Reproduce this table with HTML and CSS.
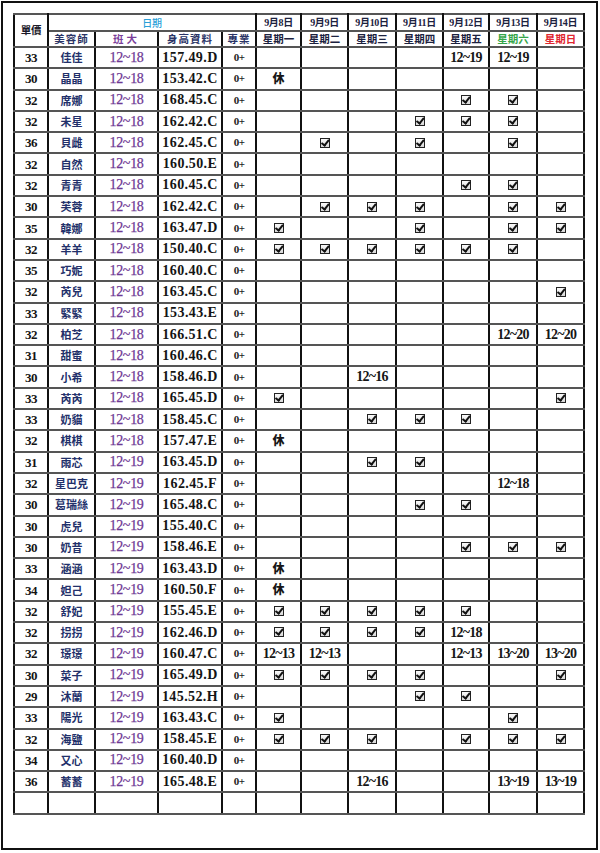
FILE: index.html
```html
<!DOCTYPE html>
<html lang="zh-Hant">
<head>
<meta charset="utf-8">
<title>班表</title>
<link rel="stylesheet" href="styles.css">
</head>
<body>
<div class="frame">
<table class="sheet">
<colgroup>
<col class="w34"><col class="w47"><col class="w63"><col class="w64"><col class="w34">
<col class="w45"><col class="w47"><col class="w48"><col class="w47"><col class="w46"><col class="w48"><col class="w47">
</colgroup>
<thead>
<tr class="hr1">
<th rowspan="2" class="price-h">單價</th>
<th colspan="4" class="date-h">日期</th>
<th>9月8日</th><th>9月9日</th><th>9月10日</th><th>9月11日</th><th>9月12日</th><th>9月13日</th><th>9月14日</th>
</tr>
<tr class="hr2">
<th class="sub">美容師</th><th class="sub">班大</th><th class="sub">身高資料</th><th class="sub">專業</th>
<th>星期一</th><th>星期二</th><th>星期三</th><th>星期四</th><th>星期五</th><th class="sat">星期六</th><th class="sun">星期日</th>
</tr>
</thead>
<tbody>
<tr><td>33</td><td>佳佳</td><td>12~18</td><td>157.49.D</td><td>0+</td><td></td><td></td><td></td><td></td><td>12~19</td><td>12~19</td><td></td></tr>
<tr><td>30</td><td>晶晶</td><td>12~18</td><td>153.42.C</td><td>0+</td><td><span class="off">休</span></td><td></td><td></td><td></td><td></td><td></td><td></td></tr>
<tr><td>32</td><td>席娜</td><td>12~18</td><td>168.45.C</td><td>0+</td><td></td><td></td><td></td><td></td><td><i class="chk"></i></td><td><i class="chk"></i></td><td></td></tr>
<tr><td>32</td><td>未星</td><td>12~18</td><td>162.42.C</td><td>0+</td><td></td><td></td><td></td><td><i class="chk"></i></td><td><i class="chk"></i></td><td><i class="chk"></i></td><td></td></tr>
<tr><td>36</td><td>貝雌</td><td>12~18</td><td>162.45.C</td><td>0+</td><td></td><td><i class="chk"></i></td><td></td><td><i class="chk"></i></td><td></td><td><i class="chk"></i></td><td></td></tr>
<tr><td>32</td><td>自然</td><td>12~18</td><td>160.50.E</td><td>0+</td><td></td><td></td><td></td><td></td><td></td><td></td><td></td></tr>
<tr><td>32</td><td>青青</td><td>12~18</td><td>160.45.C</td><td>0+</td><td></td><td></td><td></td><td></td><td><i class="chk"></i></td><td><i class="chk"></i></td><td></td></tr>
<tr><td>30</td><td>芙蓉</td><td>12~18</td><td>162.42.C</td><td>0+</td><td></td><td><i class="chk"></i></td><td><i class="chk"></i></td><td><i class="chk"></i></td><td></td><td><i class="chk"></i></td><td><i class="chk"></i></td></tr>
<tr><td>35</td><td>韓娜</td><td>12~18</td><td>163.47.D</td><td>0+</td><td><i class="chk"></i></td><td></td><td></td><td><i class="chk"></i></td><td></td><td><i class="chk"></i></td><td><i class="chk"></i></td></tr>
<tr><td>32</td><td>羊羊</td><td>12~18</td><td>150.40.C</td><td>0+</td><td><i class="chk"></i></td><td><i class="chk"></i></td><td><i class="chk"></i></td><td><i class="chk"></i></td><td><i class="chk"></i></td><td><i class="chk"></i></td><td></td></tr>
<tr><td>35</td><td>巧妮</td><td>12~18</td><td>160.40.C</td><td>0+</td><td></td><td></td><td></td><td></td><td></td><td></td><td></td></tr>
<tr><td>32</td><td>芮兒</td><td>12~18</td><td>163.45.C</td><td>0+</td><td></td><td></td><td></td><td></td><td></td><td></td><td><i class="chk"></i></td></tr>
<tr><td>33</td><td>緊緊</td><td>12~18</td><td>153.43.E</td><td>0+</td><td></td><td></td><td></td><td></td><td></td><td></td><td></td></tr>
<tr><td>32</td><td>柏芝</td><td>12~18</td><td>166.51.C</td><td>0+</td><td></td><td></td><td></td><td></td><td></td><td>12~20</td><td>12~20</td></tr>
<tr><td>31</td><td>甜蜜</td><td>12~18</td><td>160.46.C</td><td>0+</td><td></td><td></td><td></td><td></td><td></td><td></td><td></td></tr>
<tr><td>30</td><td>小希</td><td>12~18</td><td>158.46.D</td><td>0+</td><td></td><td></td><td>12~16</td><td></td><td></td><td></td><td></td></tr>
<tr><td>33</td><td>芮芮</td><td>12~18</td><td>165.45.D</td><td>0+</td><td><i class="chk"></i></td><td></td><td></td><td></td><td></td><td></td><td><i class="chk"></i></td></tr>
<tr><td>33</td><td>奶貓</td><td>12~18</td><td>158.45.C</td><td>0+</td><td></td><td></td><td><i class="chk"></i></td><td><i class="chk"></i></td><td><i class="chk"></i></td><td></td><td></td></tr>
<tr><td>32</td><td>棋棋</td><td>12~18</td><td>157.47.E</td><td>0+</td><td><span class="off">休</span></td><td></td><td></td><td></td><td></td><td></td><td></td></tr>
<tr><td>31</td><td>雨芯</td><td>12~19</td><td>163.45.D</td><td>0+</td><td></td><td></td><td><i class="chk"></i></td><td><i class="chk"></i></td><td></td><td></td><td></td></tr>
<tr><td>32</td><td>星巴克</td><td>12~19</td><td>162.45.F</td><td>0+</td><td></td><td></td><td></td><td></td><td></td><td>12~18</td><td></td></tr>
<tr><td>30</td><td>葛瑞絲</td><td>12~19</td><td>165.48.C</td><td>0+</td><td></td><td></td><td></td><td><i class="chk"></i></td><td><i class="chk"></i></td><td></td><td></td></tr>
<tr><td>30</td><td>虎兒</td><td>12~19</td><td>155.40.C</td><td>0+</td><td></td><td></td><td></td><td></td><td></td><td></td><td></td></tr>
<tr><td>30</td><td>奶昔</td><td>12~19</td><td>158.46.E</td><td>0+</td><td></td><td></td><td></td><td></td><td><i class="chk"></i></td><td><i class="chk"></i></td><td><i class="chk"></i></td></tr>
<tr><td>33</td><td>涵涵</td><td>12~19</td><td>163.43.D</td><td>0+</td><td><span class="off">休</span></td><td></td><td></td><td></td><td></td><td></td><td></td></tr>
<tr><td>34</td><td>妲己</td><td>12~19</td><td>160.50.F</td><td>0+</td><td><span class="off">休</span></td><td></td><td></td><td></td><td></td><td></td><td></td></tr>
<tr><td>32</td><td>舒妃</td><td>12~19</td><td>155.45.E</td><td>0+</td><td><i class="chk"></i></td><td><i class="chk"></i></td><td><i class="chk"></i></td><td><i class="chk"></i></td><td><i class="chk"></i></td><td></td><td></td></tr>
<tr><td>32</td><td>拐拐</td><td>12~19</td><td>162.46.D</td><td>0+</td><td><i class="chk"></i></td><td><i class="chk"></i></td><td><i class="chk"></i></td><td><i class="chk"></i></td><td>12~18</td><td></td><td></td></tr>
<tr><td>32</td><td>璟璟</td><td>12~19</td><td>160.47.C</td><td>0+</td><td>12~13</td><td>12~13</td><td></td><td></td><td>12~13</td><td>13~20</td><td>13~20</td></tr>
<tr><td>30</td><td>菜子</td><td>12~19</td><td>165.49.D</td><td>0+</td><td><i class="chk"></i></td><td><i class="chk"></i></td><td><i class="chk"></i></td><td><i class="chk"></i></td><td></td><td></td><td><i class="chk"></i></td></tr>
<tr><td>29</td><td>沐蘭</td><td>12~19</td><td>145.52.H</td><td>0+</td><td></td><td></td><td></td><td><i class="chk"></i></td><td><i class="chk"></i></td><td></td><td></td></tr>
<tr><td>33</td><td>陽光</td><td>12~19</td><td>163.43.C</td><td>0+</td><td><i class="chk"></i></td><td></td><td></td><td></td><td></td><td><i class="chk"></i></td><td></td></tr>
<tr><td>32</td><td>海鹽</td><td>12~19</td><td>158.45.E</td><td>0+</td><td><i class="chk"></i></td><td><i class="chk"></i></td><td><i class="chk"></i></td><td></td><td><i class="chk"></i></td><td><i class="chk"></i></td><td><i class="chk"></i></td></tr>
<tr><td>34</td><td>又心</td><td>12~19</td><td>160.40.D</td><td>0+</td><td></td><td></td><td></td><td></td><td></td><td></td><td></td></tr>
<tr><td>36</td><td>蓄蓄</td><td>12~19</td><td>165.48.E</td><td>0+</td><td></td><td></td><td>12~16</td><td></td><td></td><td>13~19</td><td>13~19</td></tr>
<tr><td></td><td></td><td></td><td></td><td></td><td></td><td></td><td></td><td></td><td></td><td></td><td></td></tr>
</tbody>
</table>
</div>
</body>
</html>
```

FILE: styles.css
```css
html, body {
  margin: 0;
  padding: 0;
  background: #fff;
}

.frame {
  box-sizing: border-box;
  width: 597px;
  height: 849px;
  margin: 1px 0 0 1px;
  border: 2px solid #111;
  padding: 10px;
}

.sheet {
  border-collapse: collapse;
  table-layout: fixed;
  width: 571px;
  font-family: "Liberation Serif", "Noto Sans CJK TC", serif;
  font-weight: bold;
  color: #111;
}

.w34 { width: 34px; }
.w45 { width: 45px; }
.w46 { width: 46px; }
.w47 { width: 47px; }
.w48 { width: 48px; }
.w63 { width: 63px; }
.w64 { width: 64px; }

.sheet th,
.sheet td {
  padding: 0;
  text-align: center;
  vertical-align: middle;
  white-space: nowrap;
  overflow: hidden;
  border-left: 2px solid #111;
  border-right: 2px solid #111;
  border-top: 2px solid #555;
  border-bottom: 2px solid #555;
  line-height: 1;
}

.hr1 { height: 17px; }
.hr2 { height: 16px; }

.sheet th {
  font-family: "Noto Sans CJK TC", sans-serif;
  font-size: 10.5px;
  font-weight: 700;
  color: #1c2240;
}

.hr1 th {
  font-family: "Liberation Serif", "Noto Sans CJK TC", serif;
  font-size: 10px;
  letter-spacing: -0.3px;
}

.sheet th.price-h {
  font-family: "Noto Sans CJK TC", sans-serif;
  font-size: 10.5px;
  color: #1a1a2a;
}

.sheet th.date-h {
  font-family: "Noto Sans CJK TC", sans-serif;
  color: #2a9fd8;
  font-size: 10px;
  font-weight: 500;
}

.sheet th.sub {
  font-size: 10.5px;
  letter-spacing: 1px;
  color: #2a3466;
}

.sheet th.sub:nth-child(2) {
  color: #7a3e9a;
  letter-spacing: 3px;
}

.sheet th.sat { color: #36a64a; }
.sheet th.sun { color: #e0262f; }

.sheet tbody tr { height: 21.3px; }

.sheet td {
  font-size: 13px;
}

.sheet td:nth-child(1) {
  font-size: 13px;
  letter-spacing: -0.6px;
  color: #141414;
}

.sheet td:nth-child(2) {
  font-family: "Noto Sans CJK TC", sans-serif;
  font-size: 11px;
  font-weight: 700;
  color: #22306a;
}

.sheet td:nth-child(3) {
  font-weight: normal;
  font-size: 14px;
  letter-spacing: -0.3px;
  color: #6e3894;
  -webkit-text-stroke: 0.25px #6e3894;
}

.sheet td:nth-child(4) {
  font-size: 14px;
  letter-spacing: 0.4px;
  color: #141414;
}

.sheet td:nth-child(5) {
  font-size: 11px;
  letter-spacing: -0.5px;
  color: #222;
}

.sheet td:nth-child(n+6) {
  font-size: 14px;
  letter-spacing: -0.7px;
  color: #161616;
}

.off {
  font-family: "Noto Sans CJK TC", sans-serif;
  font-size: 12px;
  font-weight: 900;
  letter-spacing: 0;
}

.chk {
  display: inline-block;
  position: relative;
  box-sizing: border-box;
  width: 10px;
  height: 10px;
  border: 1.5px solid #222;
  background: linear-gradient(#fafafa, #d8d8d8);
  vertical-align: middle;
  margin-top: -2px;
}

.chk::after {
  content: "";
  position: absolute;
  left: 2px;
  top: -1px;
  width: 2.5px;
  height: 5.5px;
  border-right: 2px solid #111;
  border-bottom: 2px solid #111;
  transform: rotate(38deg);
}
```
